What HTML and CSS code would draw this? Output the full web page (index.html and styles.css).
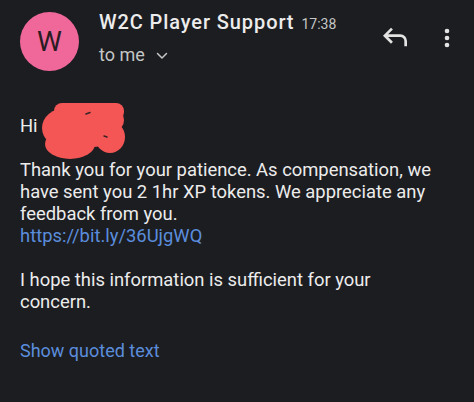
FILE: index.html
```html
<!DOCTYPE html>
<html>
<head>
<meta charset="utf-8">
<link rel="stylesheet" href="styles.css">
</head>
<body>
<div class="mail">
  <header class="head">
    <div class="avatar">W</div>
    <div class="meta">
      <div class="from"><span class="name">W2C Player Support</span><span class="time">17:38</span></div>
      <div class="to">to me
        <svg class="chev" width="12" height="8" viewBox="0 0 12 8"><path d="M1.5 1.5 L6 6 L10.5 1.5" fill="none" stroke="#c4c7c5" stroke-width="1.5" stroke-linecap="round" stroke-linejoin="round"/></svg>
      </div>
    </div>
    <div class="actions">
      <svg class="reply" width="32" height="32" viewBox="0 0 24 24"><path fill="#e3e3e3" d="M19 19v-4q0-1.25-.875-2.125T16 12H6.825l3.6 3.6L9 17l-6-6 6-6 1.425 1.4-3.6 3.6H16q2.075 0 3.538 1.463T21 15v4h-2Z"/></svg>
      <svg class="more" width="28" height="28" viewBox="0 0 24 24"><circle cx="12" cy="6" r="2" fill="#e3e3e3"/><circle cx="12" cy="12" r="2" fill="#e3e3e3"/><circle cx="12" cy="18" r="2" fill="#e3e3e3"/></svg>
    </div>
  </header>
  <div class="body">
    <p class="greet">Hi <svg class="blob" width="84" height="58" viewBox="0 0 84 58">
      <g fill="#f45656">
        <rect x="12" y="1" width="70" height="17" rx="8"/>
        <ellipse cx="24" cy="26" rx="24" ry="20"/>
        <ellipse cx="28" cy="42" rx="25" ry="15"/>
        <ellipse cx="68" cy="35" rx="15" ry="16"/>
        <ellipse cx="50" cy="28" rx="24" ry="17"/>
        <ellipse cx="74" cy="18" rx="8" ry="10"/>
      </g>
      <path d="M44 12 l4 -1.5" stroke="#3a2326" stroke-width="1.5" stroke-linecap="round"/>
      <path d="M62 34 l3 1" stroke="#3a2326" stroke-width="1.5" stroke-linecap="round"/>
    </svg></p>
    <p>Thank you for your patience. As compensation, we have sent you 2 1hr XP tokens. We appreciate any feedback from you.<br><a class="link">https://bit.ly/36UjgWQ</a></p>
    <p>I hope this information is sufficient for your<br>concern.</p>
    <a class="quoted">Show quoted text</a>
  </div>
</div>
</body>
</html>
```
FILE: styles.css
```css
html, body {
  margin: 0;
  padding: 0;
  background: #1c1d21;
  width: 474px;
  height: 402px;
  overflow: hidden;
  font-family: Roboto, "Liberation Sans", sans-serif;
}
.mail {
  padding: 0 13px 0 20px;
}
.head {
  display: flex;
  align-items: flex-start;
  padding-top: 10px;
}
.avatar {
  width: 59px;
  height: 59px;
  margin-top: 2px;
  border-radius: 50%;
  background: #f0679a;
  color: #2a1c22;
  font-size: 28px;
  display: flex;
  align-items: center;
  justify-content: center;
  flex: none;
}
.meta {
  margin-left: 20px;
  flex: 1;
}
.from {
  line-height: 24px;
  white-space: nowrap;
}
.name {
  font-size: 20px;
  font-weight: 500;
  letter-spacing: 0.9px;
  color: #ececec;
}
.time {
  font-size: 14px;
  color: #c4c7c5;
  margin-left: 7px;
}
.to {
  margin-top: 7px;
  font-size: 18px;
  line-height: 24px;
  color: #c4c7c5;
  display: flex;
  align-items: center;
}
.chev {
  margin-left: 11px;
  margin-top: 2px;
}
.actions {
  display: flex;
  align-items: flex-start;
  margin-top: 11px;
}
.reply {
  display: block;
}
.more {
  display: block;
  margin-left: 22px;
  margin-top: 3px;
}
.body {
  margin-top: 44px;
  font-size: 18.4px;
  line-height: 22px;
  color: #ececec;
}
.body p {
  margin: 0 0 22px;
}
.greet {
  position: relative;
}
.blob {
  position: absolute;
  left: 22px;
  top: -13px;
}
.link {
  color: #5b8ddd;
}
.quoted {
  display: block;
  margin-top: 27px;
  font-size: 18px;
  color: #5b8ddd;
}
```
